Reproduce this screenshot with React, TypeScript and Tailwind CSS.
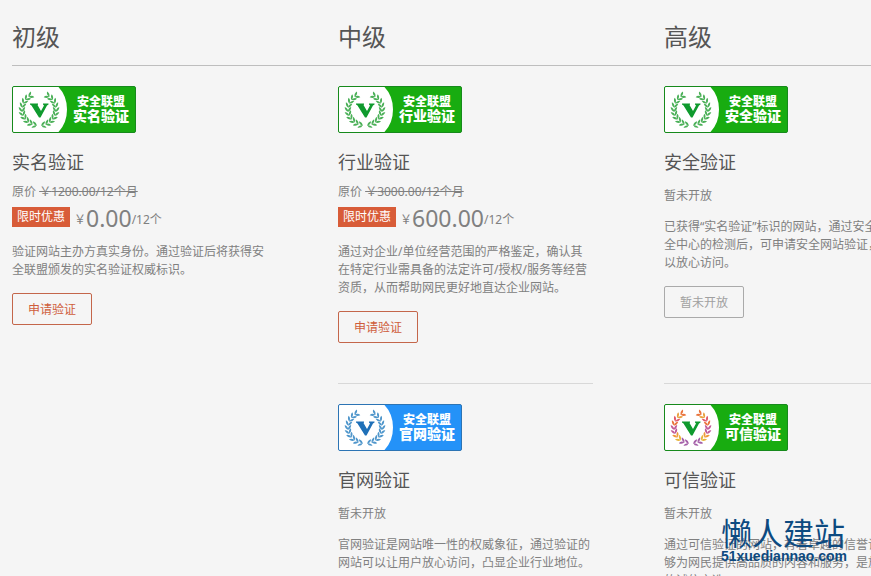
type Tone = "green" | "blue" | "rainbow";

const TONES: Record<Tone, { badge: string; mark: string; leaves: string[] }> = {
  green: { badge: "border-[#178a1c] bg-[#18ac10]", mark: "#0f9a2e", leaves: ["#4bb058"] },
  blue: { badge: "border-[#2c74b4] bg-[#2492f8]", mark: "#1f70b8", leaves: ["#4f96cb"] },
  rainbow: {
    badge: "border-[#178a1c] bg-[#18ac10]",
    mark: "#0f9a2e",
    leaves: ["#a45fa8", "#a45fa8", "#e8b53a", "#ef9a3c", "#c05a98", "#c05a98", "#e9743c", "#e0566a", "#e9a040", "#e9743c"],
  },
};

function Laurel({ colors }: { colors: string[] }) {
  const steps = [0, 1, 2, 3, 4, 5, 6, 7, 8, 9];
  const branch = steps.map((i) => {
    const angle = 103 + i * 15;
    const rad = (angle * Math.PI) / 180;
    const x = Math.cos(rad) * 17;
    const y = Math.sin(rad) * 16;
    return (
      <g key={i} transform={`translate(${x.toFixed(2)} ${y.toFixed(2)}) rotate(${angle + 90})`} fill={colors[i % colors.length]}>
        <path d="M-1.600 0.300Q-1 -2.900 3 -3.300Q2.700 -.4 -1.600 0.300Z" />
        <path d="M-1.600 -0.300Q-1 2.900 3 3.300Q2.700 .4 -1.600 -0.300Z" />
      </g>
    );
  });
  return (
    <g transform="translate(26 22.500)">
      <g>{branch}</g>
      <g transform="scale(-1 1)">{branch}</g>
    </g>
  );
}

function Badge({ tone, label }: { tone: Tone; label: string }) {
  const t = TONES[tone];
  return (
    <div className={`flex h-[47px] w-[124px] overflow-hidden rounded-xs border ${t.badge}`}>
      <svg className="h-[45px] w-[54px] shrink-0" viewBox="0 0 54 45" aria-hidden="true">
        <path d="M0 0H45.500Q54 9 54 22.500T45.500 45H0Z" fill="#fff" />
        <Laurel colors={t.leaves} />
        <path d="M17 16.500H25V17.500L24.500 18L28 24L31 18.500L30 17.500V16.500H35.500V17.500L34 18.500L27.500 30.500H26L18.500 18.500L17 17.500Z" fill={t.mark} />
      </svg>
      <div className="flex grow flex-col items-center pt-2 font-black text-white">
        <span className="text-[12px] leading-[14px]">安全联盟</span>
        <span className="text-[14px] leading-[14px]">{label}</span>
      </div>
    </div>
  );
}

interface PlanProps {
  tone: Tone;
  name: string;
  original?: string;
  price?: string;
  text: string;
}

function Plan({ tone, name, original, price, text }: PlanProps) {
  return (
    <article>
      <Badge tone={tone} label={name} />
      <h3 className="mt-4 text-[18px] leading-[26px] text-[#555]">{name}</h3>
      {price ? (
        <>
          <p className="mt-2 leading-[18px]">
            原价 <del>￥{original}/12个月</del>
          </p>
          <p className="mt-0.5 flex h-[28px] items-center">
            <span className="mr-1 bg-[#d85c38] px-[5px] leading-5 text-white">限时优惠</span>
            <span className="flex items-center pt-0.5">
              <span className="w-3 pt-1">￥</span>
              <span className="text-[23px] leading-7">{price}</span>
              <span className="pt-1">/12个</span>
            </span>
          </p>
          <p className="mt-3 leading-[18px]">{text}</p>
        </>
      ) : (
        <>
          <p className="mt-3 leading-[18px]">暂未开放</p>
          <p className="mt-[13px] leading-[18px]">{text}</p>
        </>
      )}
      <button
        type="button"
        disabled={!price}
        className={`mt-[14px] h-8 w-20 rounded-xs border pt-0.5 text-[12px] ${
          price ? "border-[#c4664a] text-[#cf5d3c]" : "border-[#aaa] text-[#a0a0a0]"
        }`}
      >
        {price ? "申请验证" : "暂未开放"}
      </button>
    </article>
  );
}

export default function App() {
  return (
    <main className="relative h-screen overflow-hidden bg-[#f5f5f5] pl-3 font-['Noto_Sans','Noto_Sans_CJK_SC',sans-serif] text-[12px] text-[#808080]">
      <div className="w-max min-w-full">
        <header className="grid grid-cols-[repeat(3,255px)] gap-x-[71px] border-b border-[#bebebe] pt-[19px] pb-[11px] text-[24px] leading-[35px] text-[#555]">
          <h2>初级</h2>
          <h2>中级</h2>
          <h2>高级</h2>
        </header>
        <div className="grid grid-cols-[repeat(3,255px)] gap-x-[71px] pt-5">
          <section>
            <Plan
              tone="green"
              name="实名验证"
              original="1200.00"
              price="0.00"
              text="验证网站主办方真实身份。通过验证后将获得安全联盟颁发的实名验证权威标识。"
            />
          </section>
          <section className="grid grid-rows-[297px_auto]">
            <Plan
              tone="green"
              name="行业验证"
              original="3000.00"
              price="600.00"
              text="通过对企业/单位经营范围的严格鉴定，确认其在特定行业需具备的法定许可/授权/服务等经营资质，从而帮助网民更好地直达企业网站。"
            />
            <div className="border-t border-[#d8d8d8] pt-5">
              <Plan
                tone="blue"
                name="官网验证"
                text="官网验证是网站唯一性的权威象征，通过验证的网站可以让用户放心访问，凸显企业行业地位。"
              />
            </div>
          </section>
          <section className="grid grid-rows-[297px_auto]">
            <Plan
              tone="green"
              name="安全验证"
              text="已获得“实名验证”标识的网站，通过安全联盟安全中心的检测后，可申请安全网站验证，网民可以放心访问。"
            />
            <div className="border-t border-[#d8d8d8] pt-5">
              <Plan
                tone="rainbow"
                name="可信验证"
                text="通过可信验证的网站，有着卓越的信誉记录，能够为网民提供高品质的内容和服务，是放心可信的诚信之选。"
              />
            </div>
          </section>
        </div>
      </div>
      <div className="absolute right-6 bottom-3 text-[#0d4a80]">
        <p className="text-[31px] leading-[30px]">懒人建站</p>
        <p className="font-['Liberation_Sans',sans-serif] text-[14px] leading-4 font-bold">51xuediannao.com</p>
      </div>
    </main>
  );
}
